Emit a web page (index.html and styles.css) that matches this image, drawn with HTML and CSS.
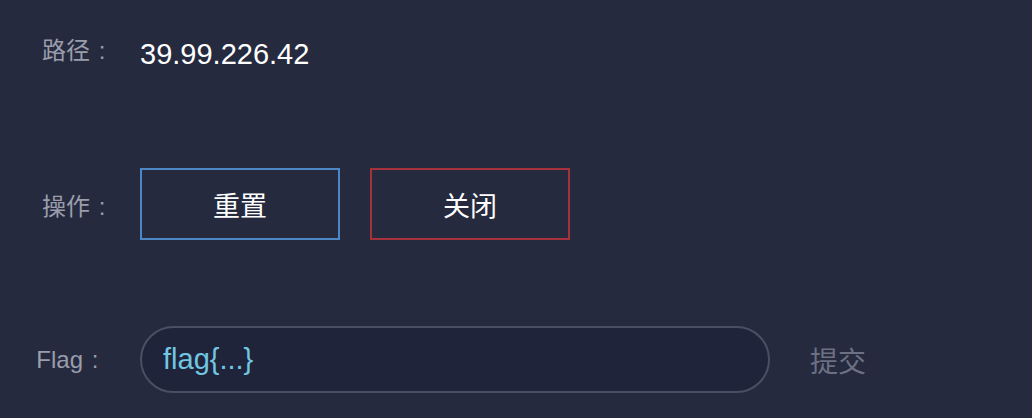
FILE: index.html
```html
<!DOCTYPE html>
<html lang="zh-CN">
<head>
<meta charset="UTF-8">
<meta name="viewport" content="width=device-width, initial-scale=1.0">
<title>靶机详情</title>
<link rel="stylesheet" href="styles.css">
</head>
<body>
    <div class="panel">
        <div class="row row-path">
            <span class="label">路径<span class="colon">:</span></span>
            <span class="value">39.99.226.42</span>
        </div>
        <div class="row row-ops">
            <span class="label">操作<span class="colon">:</span></span>
            <div class="ops">
                <button class="btn btn-reset">重置</button>
                <button class="btn btn-close">关闭</button>
            </div>
        </div>
        <div class="row row-flag">
            <span class="label label-flag">Flag<span class="colon">:</span></span>
            <input class="flag-input" type="text" placeholder="flag{...}">
            <span class="submit">提交</span>
        </div>
    </div>
</body>
</html>
```

FILE: styles.css
```css
html, body {
    margin: 0;
    padding: 0;
    background: #252a3e;
    font-family: "Liberation Sans", "Noto Sans CJK SC", sans-serif;
}
.panel {
    width: 1032px;
    height: 418px;
    padding-top: 18px;
    box-sizing: border-box;
    display: flex;
    flex-direction: column;
}
.row {
    display: flex;
    align-items: center;
}
.label {
    width: 114px;
    margin-right: 26px;
    text-align: right;
    font-size: 24px;
    color: #9a9dab;
    white-space: nowrap;
}
.label-flag {
    width: 107px;
    padding-right: 7px;
}
.colon {
    display: inline-block;
    width: 24px;
    text-align: center;
}
.row-path {
    height: 72px;
}
.row-path .label {
    margin-bottom: 12px;
}
.value {
    font-size: 29px;
    color: #ffffff;
}
.row-ops {
    margin-top: 78px;
}
.ops {
    display: flex;
    gap: 30px;
}
.btn {
    width: 200px;
    height: 72px;
    background: transparent;
    border: 2px solid #4d87c6;
    color: #ffffff;
    font-family: inherit;
    font-size: 27px;
    padding: 0;
    cursor: pointer;
}
.btn-close {
    border-color: #a5323a;
}
.row-flag {
    margin-top: 86px;
}
.flag-input {
    width: 630px;
    height: 67px;
    box-sizing: border-box;
    border: 2px solid #4a4f64;
    border-radius: 34px;
    background: #20243a;
    padding: 0 21px;
    font-family: inherit;
    font-size: 29px;
    color: #71c6e2;
    outline: none;
}
.flag-input::placeholder {
    color: #71c6e2;
}
.submit {
    margin-left: 40px;
    font-size: 28px;
    color: #6c7083;
    cursor: pointer;
}
```
